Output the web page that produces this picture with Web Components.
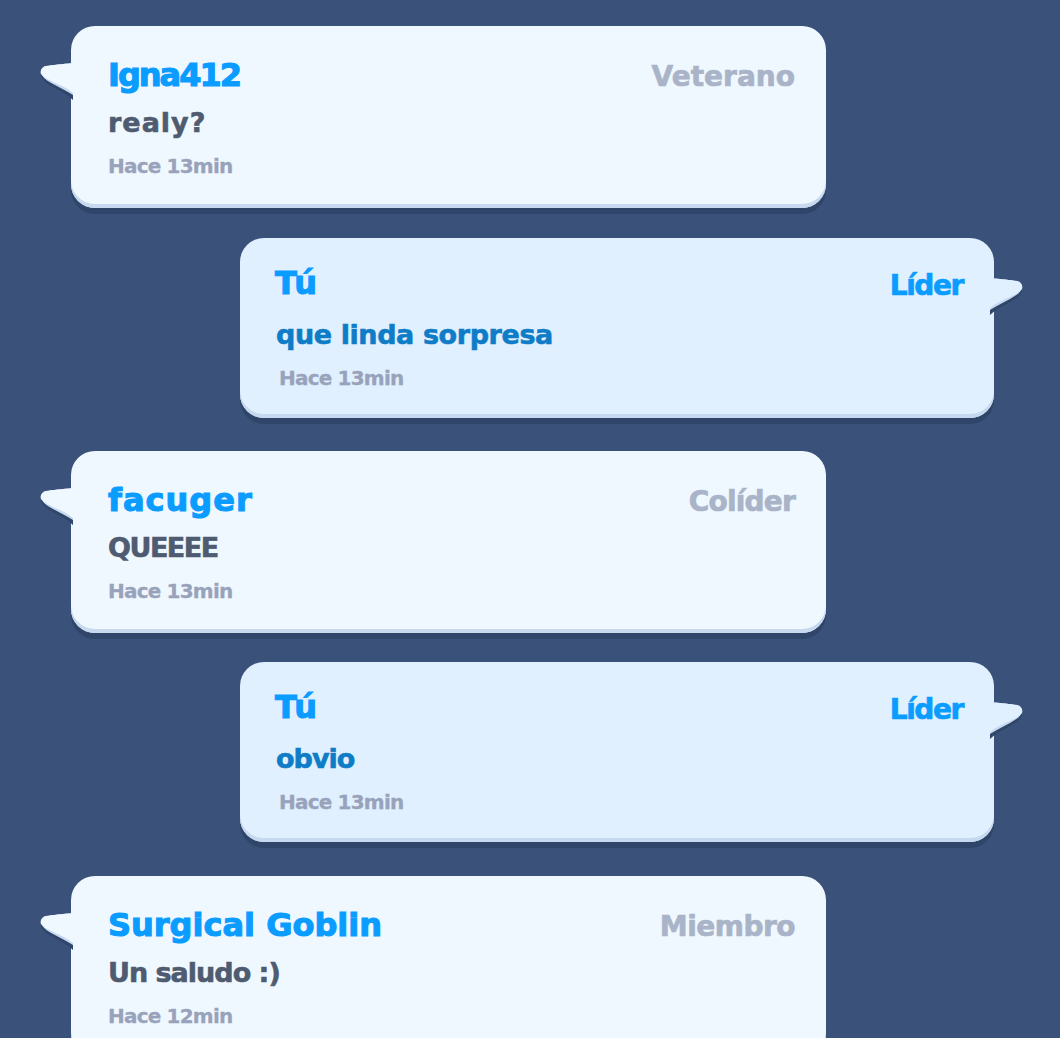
<!DOCTYPE html>
<html>
<head>
<meta charset="utf-8">
<style>
  html, body { margin: 0; height: 100%; overflow: hidden; background: #3a5179; }
</style>
</head>
<body>
<chat-list>
  <chat-bubble style="--name-track:-2px;--role-track:0;--text-track:1px" name="Igna412" role="Veterano" time="Hace 13min">realy?</chat-bubble>
  <chat-bubble mine style="--name-track:1px;--role-track:-1.4px;--text-track:-.4px" name="Tú" role="Líder" time="Hace 13min">que linda sorpresa</chat-bubble>
  <chat-bubble style="--name-track:1px;--role-track:-.8px;--text-track:-1.5px" name="facuger" role="Colíder" time="Hace 13min">QUEEEE</chat-bubble>
  <chat-bubble mine style="margin-top:29px;margin-bottom:34px;--name-track:1px;--role-track:-1.4px;--text-track:-1px" name="Tú" role="Líder" time="Hace 13min">obvio</chat-bubble>
  <chat-bubble style="--name-track:0;--role-track:-.5px;--text-track:-1px" name="Surgical Goblin" role="Miembro" time="Hace 12min">Un saludo :)</chat-bubble>
</chat-list>
<script>
const listTemplate = document.createElement('template')
listTemplate.innerHTML = `
<style>
  :host {
    display: flex;
    flex-direction: column;
    padding-top: 26px;
    font-family: "DejaVu Sans", "Liberation Sans", sans-serif;
  }
</style>
<slot></slot>
`

customElements.define('chat-list', class extends HTMLElement {
  constructor() {
    super()
    this.attachShadow({ mode: 'open' })
    this.shadowRoot.appendChild(listTemplate.content.cloneNode(true))
  }
})

const bubbleTemplate = document.createElement('template')
bubbleTemplate.innerHTML = `
<style>
  :host {
    display: block;
    position: relative;
    box-sizing: border-box;
    width: 755px;
    height: 182px;
    margin-left: 71px;
    padding: 32px 31px 0 37px;
    border-radius: 24px;
    background: #f0f8ff;
    box-shadow: inset 0 -4px 0 #c6d9ee, 0 6px 0 #2f4569;
  }
  :host([mine]) {
    height: 180px;
    margin: 30px 0 33px 240px;
    width: 754px;
    background: #e0f0ff;
    padding-left: 35px;
  }
  svg {
    position: absolute;
    left: -31px;
    top: 36px;
    width: 33px;
    height: 44px;
  }
  :host([mine]) svg {
    left: auto;
    right: -29px;
    transform: scaleX(-1);
    top: 39px;
  }
  .head {
    display: flex;
    justify-content: space-between;
    align-items: flex-start;
    height: 34px;
  }
  .name {
    font-size: 32px;
    line-height: 34px;
    font-weight: 700;
    color: #0a9cff;
    letter-spacing: var(--name-track);
    -webkit-text-stroke: 1.1px #0a9cff;
  }
  :host([mine]) .name { margin-top: -4px; }
  .role {
    margin-top: 2px;
    font-size: 28px;
    line-height: 34px;
    font-weight: 700;
    color: #a9b4c8;
    letter-spacing: var(--role-track);
    -webkit-text-stroke: .7px #a9b4c8;
  }
  :host([mine]) .role { color: #0a9cff; -webkit-text-stroke-color: #0a9cff; margin-top: -1px; }
  .text {
    margin-top: 15px;
    font-size: 27px;
    line-height: 32px;
    font-weight: 700;
    color: #4e5b70;
    letter-spacing: var(--text-track);
    -webkit-text-stroke: .6px #4e5b70;
  }
  :host([mine]) .text { color: #0f7cc7; -webkit-text-stroke-color: #0f7cc7; margin-top: 15px; margin-left: 1px; }
  .time {
    margin-top: 14px;
    font-size: 20px;
    line-height: 26px;
    font-weight: 700;
    color: #98a3bb;
    letter-spacing: -.8px;
    -webkit-text-stroke: .3px #98a3bb;
  }
  :host([mine]) .time { margin-left: 4px; margin-top: 14px; }
</style>
<svg viewBox="0 0 33 44"><path d="M33 4 C22 5 12 6 6 7 C1 8 0 12 2 16 C5 21 8 22 13 25 C20 29 27 32 33 38 Z" fill="#2f4569"/><path d="M33 1 C22 2 12 3 6 4 C1 5 0 10 2 13 C4 17 8 19 13 22 C20 26 27 29 33 33 Z" fill="#c6d9ee"/><path d="M33 1 C22 2 12 3 6 4 C1 5 0 10 1 12 C4 16 8 17 13 20 C20 23 27 26 33 31 Z" fill="currentColor"/></svg>
<div class="head"><span class="name"></span><span class="role"></span></div>
<div class="text"><slot></slot></div>
<div class="time"></div>
`

customElements.define('chat-bubble', class extends HTMLElement {
  constructor() {
    super()
    this.attachShadow({ mode: 'open' })
    this.shadowRoot.appendChild(bubbleTemplate.content.cloneNode(true))
  }

  connectedCallback() {
    this.shadowRoot.querySelector('.name').textContent = this.getAttribute('name')
    this.shadowRoot.querySelector('.role').textContent = this.getAttribute('role')
    this.shadowRoot.querySelector('.time').textContent = this.getAttribute('time')
    this.shadowRoot.querySelector('svg').style.color = this.hasAttribute('mine') ? '#e0f0ff' : '#f0f8ff'
  }
})
</script>
</body>
</html>
